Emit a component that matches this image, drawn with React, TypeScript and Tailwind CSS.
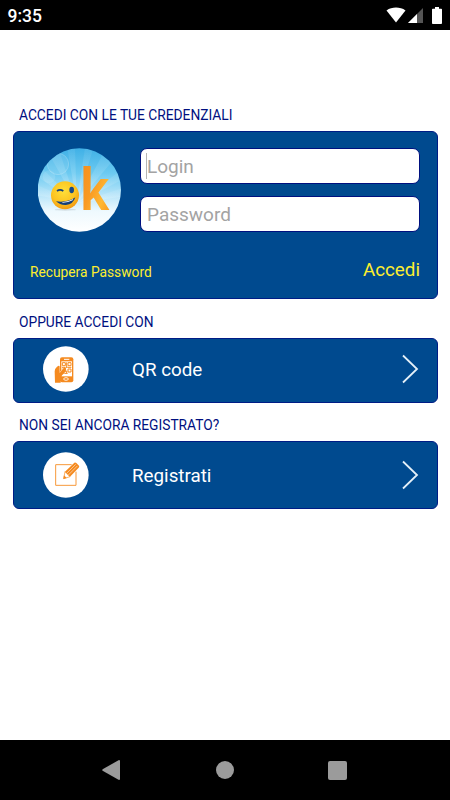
import React from "react";

const WifiIcon = () => (
  <svg className="w-5 h-4" viewBox="0 0 20 16">
    <path d="M0.5 3.4C6 -0.3 14 -0.3 19.5 3.4L10 15.5Z" fill="#fff" />
  </svg>
);

const SignalIcon = () => (
  <svg className="w-[15px] h-[15px]" viewBox="0 0 15 15">
    <path d="M0 15L15 0V15Z" fill="#555" />
    <path d="M0 15L9 6V15Z" fill="#fff" />
  </svg>
);

const BatteryIcon = () => (
  <svg className="w-[10px] h-[17px]" viewBox="0 0 10 17">
    <path
      d="M3 0H7V1.7H9.2Q10 1.7 10 2.6V16Q10 17 9.2 17H0.8Q0 17 0 16V2.6Q0 1.7 0.8 1.7H3Z"
      fill="#fff"
    />
  </svg>
);

const StatusBar = () => (
  <header className="flex h-[30px] items-center justify-between bg-black pl-[7.5px] pr-[8.5px]">
    <span className="pt-[3px] text-[17.5px] font-medium leading-none text-white">
      9:35
    </span>
    <div className="flex items-center">
      <WifiIcon />
      <div className="ml-[2px] mr-[9px]">
        <SignalIcon />
      </div>
      <BatteryIcon />
    </div>
  </header>
);

const Logo = () => (
  <svg className="h-[84px] w-[84px] shrink-0" viewBox="24 24 252 252">
    <defs>
      <linearGradient id="sky" x1="0" y1="0" x2="0" y2="1">
        <stop offset="0" stopColor="#3fb0e6" />
        <stop offset="0.3" stopColor="#6ccaf1" />
        <stop offset="0.55" stopColor="#b5e4f9" />
        <stop offset="0.75" stopColor="#eef9fe" />
        <stop offset="1" stopColor="#ffffff" />
      </linearGradient>
      <linearGradient id="rays" x1="0" y1="0" x2="0" y2="1">
        <stop offset="0" stopColor="#fff" stopOpacity="0.06" />
        <stop offset="1" stopColor="#fff" stopOpacity="0.22" />
      </linearGradient>
      <linearGradient id="letter" x1="0" y1="0" x2="1" y2="1">
        <stop offset="0" stopColor="#f28a1c" />
        <stop offset="0.45" stopColor="#f99a22" />
        <stop offset="0.7" stopColor="#ffb833" />
        <stop offset="1" stopColor="#f68a16" />
      </linearGradient>
      <radialGradient id="face" cx="0.45" cy="0.35" r="0.65">
        <stop offset="0" stopColor="#ffdf3a" />
        <stop offset="0.65" stopColor="#fcc320" />
        <stop offset="1" stopColor="#f29a12" />
      </radialGradient>
      <clipPath id="disc">
        <circle cx="148" cy="150" r="125" />
      </clipPath>
    </defs>
    <g clipPath="url(#disc)">
      <rect x="22" y="24" width="252" height="252" fill="url(#sky)" />
      <g fill="url(#rays)">
        <path d="M140 190L22 70V110Z" />
        <path d="M140 190L22 135V165Z" />
        <path d="M140 190L50 30L85 24Z" />
        <path d="M140 190L112 24H135Z" />
        <path d="M140 190L165 24H190Z" />
        <path d="M140 190L225 30L250 60Z" />
        <path d="M140 190L274 90V120Z" />
        <path d="M140 190L274 145V170Z" />
      </g>
      <circle cx="84" cy="72" r="32" fill="#fff" fillOpacity="0.1" stroke="#fff" strokeOpacity="0.3" strokeWidth="2" />
      <circle cx="57" cy="110" r="19" fill="#fff" fillOpacity="0.12" />
    </g>
    <ellipse cx="106" cy="209" rx="32" ry="3" fill="#9aa7ad" fillOpacity="0.3" />
    <circle cx="105" cy="166" r="42" fill="url(#face)" />
    <path d="M81 153Q90 146 100 153" fill="none" stroke="#173f78" strokeWidth="5" />
    <ellipse cx="125" cy="150" rx="7" ry="9.5" fill="#174a88" />
    <path d="M78 184Q112 189 136 172Q130 193 108 195Q90 196 78 184Z" fill="#173f78" />
    <path d="M96 186.5Q114 186 130 177L128 181Q115 188 98 188.5Z" fill="#fff" />
    <text
      x="149"
      y="210"
      fill="url(#letter)"
      fontFamily="Open Sans"
      fontWeight="700"
      fontSize="171"
      textLength="89"
      lengthAdjust="spacingAndGlyphs"
    >
      k
    </text>
  </svg>
);

const QrPhoneIcon = () => (
  <svg className="h-[46px] w-[46px]" viewBox="23 18 138 138">
    <circle cx="91.5" cy="87" r="68.5" fill="#fff" />
    <rect x="74" y="52" width="40" height="75" rx="6" fill="#f58a1f" />
    <rect x="78" y="64" width="32" height="45" fill="#fff" />
    <path d="M86 58H102" stroke="#fff" strokeWidth="3" />
    <ellipse cx="92" cy="117" rx="7" ry="4" fill="none" stroke="#fff" strokeWidth="2.5" />
    <g fill="none" stroke="#f58a1f" strokeWidth="3">
      <path d="M81 68H90V77H81ZM98 68H107V77H98ZM98 87H107V96H98Z" />
      <path d="M94 67V84M80 82H90M96 82H108M84 85V92M90 86V96M94 92V100M87 100H97" />
    </g>
    <path
      d="M58 94Q58 86 65 80L70 77Q73 77 73 80V96L84 83Q91 78 92 86Q90 99 80 106L76 114V128H59Z"
      fill="#f58a1f"
    />
    <path d="M73 98L85 83" stroke="#fff" strokeWidth="1.5" />
  </svg>
);

const EditIcon = () => (
  <svg className="h-[46px] w-[46px]" viewBox="23 18 138 138">
    <circle cx="91.5" cy="87" r="68.5" fill="#fff" />
    <path d="M109 56H61V118H122V77" fill="none" stroke="#f7993b" strokeWidth="3" />
    <path d="M85 98L89 77L104 92Z" fill="#fff" stroke="#f58a1f" strokeWidth="2" />
    <path d="M84 99L86 88L94 96Z" fill="#f58a1f" />
    <path d="M89 77L117 50Q120 48 123 51L131 59Q133 62 130 65L104 92Z" fill="#f58a1f" />
    <path d="M94 82L121 55M99 87L126 60" fill="none" stroke="#fff" strokeWidth="1.5" />
  </svg>
);

const ChevronIcon = () => (
  <svg className="h-[30px] w-[17px]" viewBox="0 0 17 30">
    <path d="M1 1.5L15 15L1 28.5" fill="none" stroke="#e4f0f8" strokeWidth="1.8" />
  </svg>
);

const App = () => {
  return (
    <div className="flex h-[800px] w-[450px] flex-col bg-white font-['Roboto',sans-serif]">
      <StatusBar />
      <main className="flex flex-1 flex-col px-[12.5px] pt-[75px]">
        <h2 className="h-[26px] pl-[6.5px] text-[13.77px] leading-5 text-[#00107f]">
          ACCEDI CON LE TUE CREDENZIALI
        </h2>
        <section className="h-[168px] rounded-[6px] border border-[#001c85] bg-[#004a8f] pl-6 pr-[16.5px]">
          <div className="flex pt-4">
            <Logo />
            <div className="ml-[18.5px] flex flex-1 flex-col gap-3">
              <div className="flex h-9 items-center rounded-[7px] border border-[#00107f] bg-white pl-[5px] text-[19px] text-[#a3a3a3]">
                <span className="h-[26px] w-px bg-[#b5b5b5]" />
                <span className="pt-[2px]">Login</span>
              </div>
              <div className="flex h-9 items-center rounded-[7px] border border-[#00107f] bg-white pl-[6px] pt-[2px] text-[19px] text-[#a3a3a3]">
                Password
              </div>
            </div>
          </div>
          <div className="mt-6 flex items-center justify-between text-[#fdee2f]">
            <button className="-ml-[7.5px] pt-[5px] text-[13.77px]">Recupera Password</button>
            <button className="text-[18.8px]">Accedi</button>
          </div>
        </section>

        <h2 className="h-[39px] pl-[6.5px] pt-[13px] text-[13.77px] leading-5 text-[#00107f]">
          OPPURE ACCEDI CON
        </h2>
        <button className="flex h-[65px] items-center rounded-[6px] border border-[#001c85] bg-[#004a8f] pl-[29px] pr-[18px] text-[18.8px] text-white">
          <span className="-mt-[3px]">
            <QrPhoneIcon />
          </span>
          <span className="ml-[43.5px] flex-1 text-left">QR code</span>
          <span className="-mt-[3px]">
            <ChevronIcon />
          </span>
        </button>

        <h2 className="h-[38px] pl-[6.5px] pt-3 text-[13.77px] leading-5 text-[#00107f]">
          NON SEI ANCORA REGISTRATO?
        </h2>
        <button className="flex h-[68px] items-center rounded-[6px] border border-[#001c85] bg-[#004a8f] pl-[29px] pr-[18px] text-[18.8px] text-white">
          <span>
            <EditIcon />
          </span>
          <span className="ml-[43.5px] flex-1 pt-[2px] text-left">Registrati</span>
          <span>
            <ChevronIcon />
          </span>
        </button>
      </main>
      <nav className="flex h-[60px] items-center justify-between bg-black pl-[102px] pr-[103px]">
        <svg className="h-5 w-[18px]" viewBox="0 0 18 20">
          <path d="M17 0Q18 0 18 1V19Q18 20 17 20L0.6 10.8Q0 10 0.6 9.2Z" fill="#9b9b9b" />
        </svg>
        <span className="ml-[2px] h-[18px] w-[18px] rounded-full bg-[#9b9b9b]" />
        <span className="h-[19px] w-[19px] rounded-[2px] bg-[#9b9b9b]" />
      </nav>
    </div>
  );
};

export default App;
